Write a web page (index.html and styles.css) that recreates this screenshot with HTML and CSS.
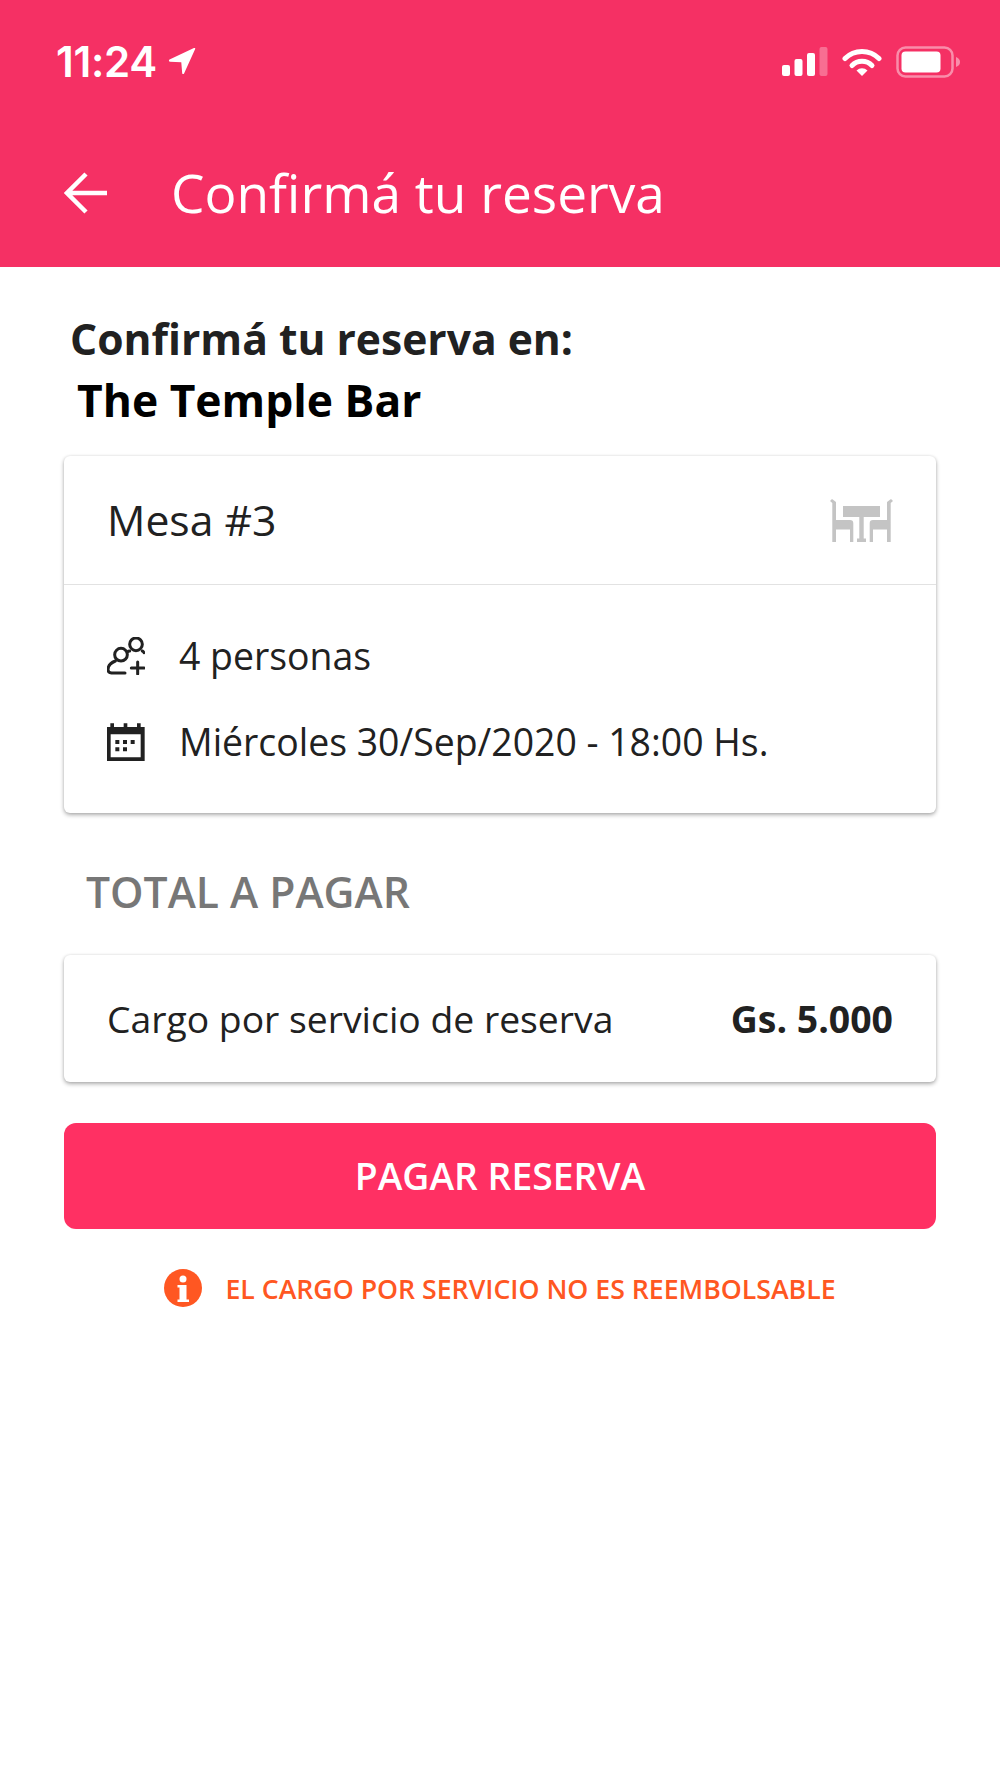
FILE: index.html
```html
<!DOCTYPE html>
<html lang="es">
<head>
<meta charset="utf-8">
<title>Confirmá tu reserva</title>
<link rel="stylesheet" href="styles.css">
</head>
<body>
<header class="appbar">
  <div class="status">
    <div class="status-left">
      <span class="time">11:24</span>
      <svg class="loc" viewBox="0 0 27 27"><path d="M1.500 12 25 1c.8-.4 1.600.2 1.200 1L15.500 25.500c-.5 1-1.700.8-1.800-.3L12.800 14.600 2 14.200c-1.200 0-1.500-1.700-.5-2.200z" fill="#fff"/></svg>
    </div>
    <div class="status-right">
      <svg class="signal" viewBox="0 0 46 30"><rect x="0" y="18" width="8" height="11" rx="2" fill="#fff"/><rect x="12.500" y="12" width="8" height="17" rx="2" fill="#fff"/><rect x="25" y="6" width="8" height="23" rx="2" fill="#fff"/><rect x="37.500" y="0" width="8" height="29" rx="2" fill="#fff" fill-opacity=".3"/></svg>
      <svg class="wifi" viewBox="0 0 40 30"><path d="M3 11.500a24 24 0 0 1 34 0" fill="none" stroke="#fff" stroke-width="5" stroke-linecap="round"/><path d="M10 18.500a14 14 0 0 1 20 0" fill="none" stroke="#fff" stroke-width="5" stroke-linecap="round"/><path d="M14.500 23.500a8 8 0 0 1 11 0L20 29z" fill="#fff"/></svg>
      <svg class="battery" viewBox="0 0 66 32"><rect x="1.500" y="1.500" width="55" height="29" rx="8" fill="none" stroke="#fff" stroke-opacity=".45" stroke-width="2.500"/><rect x="5.500" y="5.500" width="39" height="21" rx="4" fill="#fff"/><path d="M60 11c3 1 4 3 4 5s-1 4-4 5z" fill="#fff" fill-opacity=".45"/></svg>
    </div>
  </div>
  <div class="toolbar">
    <svg class="back" viewBox="0 0 44 44"><path d="M2 22h41M22 3 3 22l19 19" fill="none" stroke="#fff" stroke-width="4.500"/></svg>
    <h1 class="title">Confirmá tu reserva</h1>
  </div>
</header>
<main class="content">
  <h2 class="lead">Confirmá tu reserva en:</h2>
  <p class="venue">The Temple Bar</p>
  <section class="card">
    <div class="card-head">
      <span class="table-name">Mesa #3</span>
      <svg class="table-icon" viewBox="0 0 63 44"><g fill="#c4c4c4"><path d="M0 3l2-2 4 3v18h14a3.300 3.300 0 0 1 3.300 3.300V44H20V31.600H6V44H2.300V5z"/><path d="M63 3l-2-2-4 3v18H43a3.300 3.300 0 0 0-3.300 3.300V44H43V31.600h14V44h3.700V5z"/><rect x="13" y="8" width="37" height="11"/><rect x="29.300" y="19" width="4.400" height="22"/><rect x="27" y="40.500" width="9" height="3.500"/></g></svg>
    </div>
    <div class="card-body">
      <div class="info-row">
        <svg class="info-icon" viewBox="50 50 114 114"><g fill="none" stroke="#212121" stroke-width="9" stroke-linecap="round"><circle cx="92" cy="103" r="19"/><circle cx="137" cy="72" r="19"/><path d="M118 92c-3 0-5 1-7 3M156 92c3 1 4 3 5 5M75 122C60 128 53 138 53 148c0 8 7 10 17 10h34"/><path d="M142 125v36M123 143h38"/></g></svg>
        <span class="info-text">4 personas</span>
      </div>
      <div class="info-row">
        <svg class="info-icon" viewBox="50 304 114 114"><path fill="#212121" fill-rule="evenodd" d="M50 316h10v-11h11v11h29v-11h11v11h29v-11h11v11h12v102H50zM61 338v69h90v-69z"/><path fill="#212121" d="M75 355h12v12H75zM98 355h12v12H98zM121 355h12v12h-12zM75 377h12v12H75zM98 377h12v12H98z"/></svg>
        <span class="info-text">Miércoles 30/Sep/2020 - 18:00 Hs.</span>
      </div>
    </div>
  </section>
  <h3 class="total-label">TOTAL A PAGAR</h3>
  <section class="card charge">
    <span class="charge-name">Cargo por servicio de reserva</span>
    <strong class="charge-price">Gs. 5.000</strong>
  </section>
  <button class="pay" type="button">PAGAR RESERVA</button>
  <div class="notice">
    <svg class="notice-icon" viewBox="0 0 38 38"><circle cx="19" cy="19" r="19" fill="#ff5722"/><circle cx="19" cy="10" r="3.500" fill="#fff"/><path d="M13.500 16h9v14.500H25V33H13.500v-2.500H15.500V18.500h-2z" fill="#fff"/></svg>
    <span class="notice-text">EL CARGO POR SERVICIO NO ES REEMBOLSABLE</span>
  </div>
</main>
</body>
</html>
```
FILE: styles.css
```css
* { box-sizing: border-box; }
html, body { margin: 0; padding: 0; }
body {
  width: 1000px;
  height: 1778px;
  background: #fff;
  font-family: "Open Sans", "Noto Sans", sans-serif;
  color: #212121;
  overflow: hidden;
}
.appbar {
  height: 267px;
  background: #f53064;
  color: #fff;
  padding: 38px 0 0;
}
.status {
  height: 46px;
  display: flex;
  justify-content: space-between;
  align-items: center;
  padding: 0 38px 0 56px;
}
.status-left { display: flex; align-items: center; gap: 11px; }
.time {
  font-family: Inter, Roboto, sans-serif;
  font-size: 42px;
  font-weight: 600;
  letter-spacing: -0.3px;
  line-height: 46px;
  padding-top: 2px;
}
.loc { width: 28px; height: 28px; }
.status-right { display: flex; align-items: center; gap: 14px; padding-top: 2px; }
.signal { width: 46px; height: 30px; }
.wifi { width: 40px; height: 30px; }
.battery { width: 66px; height: 32px; }
.toolbar {
  display: flex;
  align-items: center;
  height: 62px;
  margin-top: 78px;
  padding-left: 64px;
}
.back { width: 44px; height: 44px; flex: none; }
.title {
  margin: 0 0 0 63px;
  font-size: 53.2px;
  font-weight: 400;
  line-height: 62px;
}
.content { padding: 0 64px; }
.lead {
  margin: 45px 0 0 6px;
  font-size: 42.6px;
  font-weight: 700;
  line-height: 52px;
}
.venue {
  margin: 10px 0 0 13px;
  font-size: 44.4px;
  font-weight: 700;
  line-height: 52px;
  color: #000;
}
.card {
  background: #fff;
  border-radius: 6px;
  box-shadow: 0 2px 4px rgba(0,0,0,.32), 0 0 3px rgba(0,0,0,.08);
}
.content .card:first-of-type { margin-top: 30px; }
.card-head {
  height: 129px;
  display: flex;
  align-items: center;
  justify-content: space-between;
  padding: 0 43px;
  border-bottom: 1px solid #e2e2e2;
}
.table-name { font-size: 42.7px; line-height: 56px; }
.table-icon { width: 63px; height: 44px; }
.card-body { padding: 43px 43px 0; height: 228px; }
.info-row {
  display: flex;
  align-items: center;
  height: 56px;
  margin-bottom: 30px;
}
.info-icon { width: 38px; height: 38px; flex: none; }
.info-text { margin-left: 34px; font-size: 37.4px; line-height: 56px; }
.total-label {
  margin: 51px 0 0 22px;
  font-size: 42.6px;
  font-weight: 600;
  line-height: 54px;
  color: #777;
}
.card.charge {
  margin-top: 37px;
  height: 127px;
  display: flex;
  align-items: center;
  justify-content: space-between;
  padding: 0 43px;
}
.charge-name { font-size: 37.3px; }
.charge-price { font-size: 37.4px; font-weight: 700; }
.pay {
  display: block;
  width: 100%;
  height: 106px;
  margin-top: 41px;
  padding: 0 0 2px;
  border: 0;
  border-radius: 12px;
  background: #ff3063;
  color: #fff;
  font-family: inherit;
  font-size: 37.3px;
  font-weight: 600;
}
.notice {
  display: flex;
  align-items: center;
  justify-content: center;
  margin-top: 37px;
  height: 44px;
}
.notice-icon { width: 38px; height: 38px; }
.notice-text {
  margin-left: 23px;
  font-size: 26.7px;
  font-weight: 600;
  color: #ff5722;
}
```
